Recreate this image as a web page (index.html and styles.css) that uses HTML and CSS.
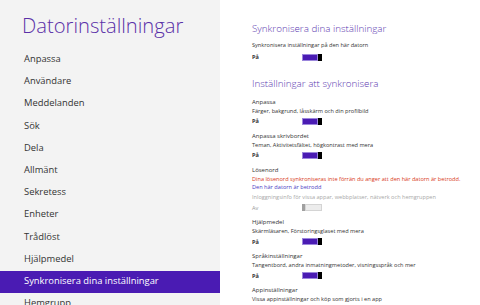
FILE: index.html
```html
<!DOCTYPE html>
<html>
<head>
    <meta charset="utf-8" />
    <title>Datorinställningar</title>
    <link rel="stylesheet" href="styles.css">
</head>
<body>
    <div class="page">
        <nav class="side">
            <h1>Datorinställningar</h1>
            <ul class="menu">
                <li>Anpassa</li>
                <li>Användare</li>
                <li>Meddelanden</li>
                <li>Sök</li>
                <li>Dela</li>
                <li>Allmänt</li>
                <li>Sekretess</li>
                <li>Enheter</li>
                <li>Trådlöst</li>
                <li>Hjälpmedel</li>
                <li class="active">Synkronisera dina inställningar</li>
                <li>Hemgrupp</li>
            </ul>
        </nav>

        <main class="content">
            <h2 class="first">Synkronisera dina inställningar</h2>
            <div class="desc intro">Synkronisera inställningar på den här datorn</div>
            <div class="switch-row intro-row">
                <span class="state">På</span>
                <span class="toggle on"><span class="track"></span><span class="thumb"></span></span>
            </div>

            <h2>Inställningar att synkronisera</h2>

            <div class="group">
                <div class="label">Anpassa</div>
                <div class="desc">Färger, bakgrund, låsskärm och din profilbild</div>
                <div class="switch-row">
                    <span class="state">På</span>
                    <span class="toggle on"><span class="track"></span><span class="thumb"></span></span>
                </div>
            </div>

            <div class="group">
                <div class="label">Anpassa skrivbordet</div>
                <div class="desc">Teman, Aktivitetsfältet, högkontrast med mera</div>
                <div class="switch-row">
                    <span class="state">På</span>
                    <span class="toggle on"><span class="track"></span><span class="thumb"></span></span>
                </div>
            </div>

            <div class="group">
                <div class="label">Lösenord</div>
                <div class="warn">Dina lösenord synkroniseras inte förrän du anger att den här datorn är betrodd.</div>
                <div class="link">Den här datorn är betrodd</div>
                <div class="desc muted">Inloggningsinfo för vissa appar, webbplatser, nätverk och hemgruppen</div>
                <div class="switch-row">
                    <span class="state off-text">Av</span>
                    <span class="toggle off"><span class="thumb"></span><span class="track"></span></span>
                </div>
            </div>

            <div class="group">
                <div class="label">Hjälpmedel</div>
                <div class="desc">Skärmläsaren, Förstoringsglaset med mera</div>
                <div class="switch-row">
                    <span class="state">På</span>
                    <span class="toggle on"><span class="track"></span><span class="thumb"></span></span>
                </div>
            </div>

            <div class="group">
                <div class="label">Språkinställningar</div>
                <div class="desc">Tangentbord, andra inmatningmetoder, visningsspråk och mer</div>
                <div class="switch-row">
                    <span class="state">På</span>
                    <span class="toggle on"><span class="track"></span><span class="thumb"></span></span>
                </div>
            </div>

            <div class="group">
                <div class="label">Appinställningar</div>
                <div class="desc">Vissa appinställningar och köp som gjorts i en app</div>
            </div>
        </main>
    </div>
</body>
</html>
```

FILE: styles.css
```css
html, body {
    margin: 0;
    height: 100%;
    overflow: hidden;
    font-family: "Open Sans", "Noto Sans", sans-serif;
    background: #fff;
}

.page {
    display: flex;
    height: 305px;
}

/* left column */

.side {
    width: 220px;
    flex: none;
    background-color: #f3f3f3;
}

.side h1 {
    margin: 12px 0 0 22px;
    font-size: 20.2px;
    line-height: 26px;
    font-weight: 300;
    color: #5a30a8;
}

.menu {
    list-style: none;
    margin: 11px 0 0 0;
    padding: 0;
}

.menu li {
    height: 22.2px;
    line-height: 19px;
    padding-left: 24px;
    font-size: 9.4px;
    color: #333;
    white-space: nowrap;
}

.menu li.active {
    background-color: #4a1bb3;
    color: #fff;
}

/* right column */

.content {
    flex: 1;
    padding: 22px 0 0 32px;
    min-width: 0;
}

.content h2 {
    margin: 15.3px 0 6.5px 0;
    font-size: 9.8px;
    line-height: 14px;
    font-weight: 300;
    color: #5b39b0;
    white-space: nowrap;
}

.content h2.first {
    margin-top: 0;
    margin-bottom: 4.8px;
}

.label, .desc, .warn, .link {
    font-size: 5.6px;
    line-height: 9px;
    color: #333;
    white-space: nowrap;
}

.label {
    font-size: 6px;
}

.warn {
    color: #d83a22;
    line-height: 8px;
}

.link {
    color: #4b3cc4;
    line-height: 8px;
}

.muted {
    color: #a8a8a8;
    margin-top: 2.5px;
}

.group {
    margin-bottom: 6px;
}

.switch-row {
    display: flex;
    align-items: center;
    height: 9px;
    margin-top: 1px;
}

.intro-row {
    margin-top: 3.2px;
}

.state {
    width: 50px;
    font-size: 5.6px;
    font-weight: 700;
    color: #333;
}

.state.off-text {
    font-weight: 400;
    color: #999;
}

.toggle {
    display: flex;
    width: 20px;
    height: 7px;
}

.toggle .track {
    flex: 1;
}

.toggle.on .track {
    background-color: #4a1bb3;
    box-shadow: inset 0 0 0 1px #9b86dc;
}

.toggle.on .thumb {
    width: 4px;
    background-color: #000;
}

.toggle.off .track {
    background-color: #ececec;
    box-shadow: inset 0 0 0 1px #d4d4d4;
}

.toggle.off .thumb {
    width: 3px;
    background-color: #a0a0a0;
}
```
